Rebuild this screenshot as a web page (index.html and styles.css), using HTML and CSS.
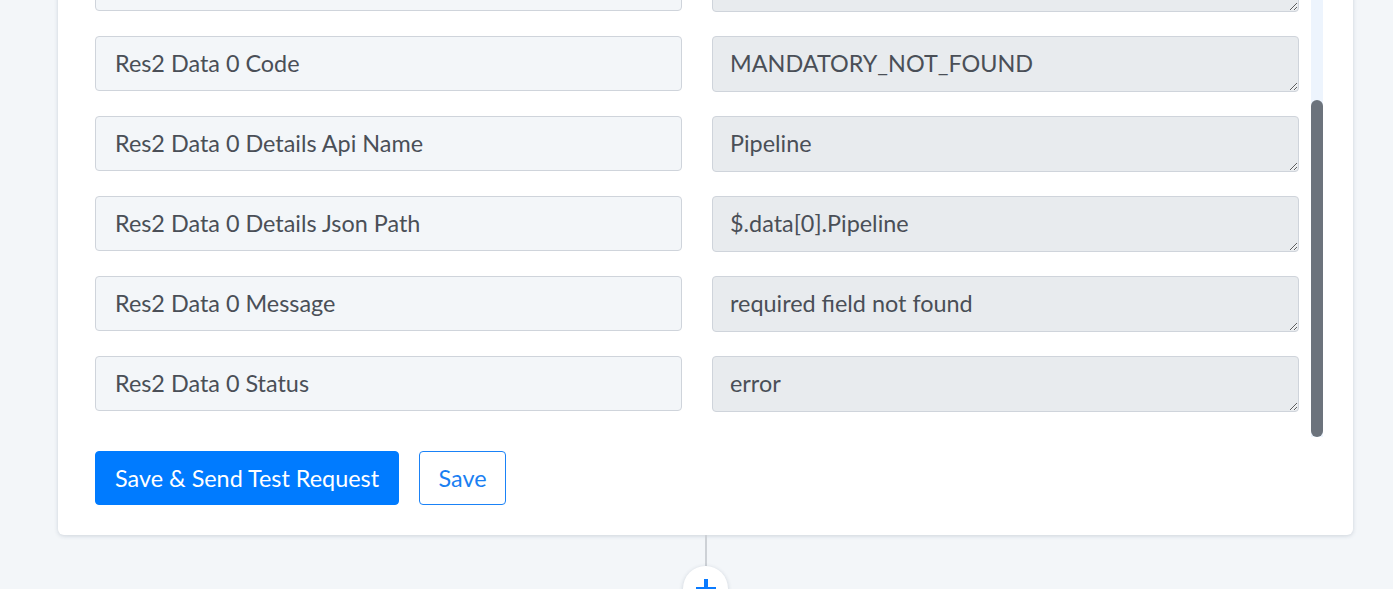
FILE: index.html
```html
<!DOCTYPE html>
<html lang="en">
<head>
<meta charset="utf-8">
<title>Response fields</title>
<link rel="stylesheet" href="styles.css">
</head>
<body>
<div class="card">
  <div class="scroll-area">
    <div class="fields">
      <input class="key" value="Res2 Data 0 Details" readonly>
      <textarea class="val" readonly>details</textarea>
      <input class="key" value="Res2 Data 0 Code" readonly>
      <textarea class="val" readonly>MANDATORY_NOT_FOUND</textarea>
      <input class="key" value="Res2 Data 0 Details Api Name" readonly>
      <textarea class="val" readonly>Pipeline</textarea>
      <input class="key" value="Res2 Data 0 Details Json Path" readonly>
      <textarea class="val" readonly>$.data[0].Pipeline</textarea>
      <input class="key" value="Res2 Data 0 Message" readonly>
      <textarea class="val" readonly>required field not found</textarea>
      <input class="key" value="Res2 Data 0 Status" readonly>
      <textarea class="val" readonly>error</textarea>
    </div>
    <div class="track"><div class="thumb"></div></div>
  </div>
  <div class="actions">
    <button class="btn btn-primary">Save &amp; Send Test Request</button>
    <button class="btn btn-outline">Save</button>
  </div>
</div>
<div class="connector">
  <div class="line"></div>
  <div class="add">
    <svg width="20" height="20" viewBox="0 0 20 20"><path d="M10 0v20M0 10h20" stroke="#0a7bff" stroke-width="4"/></svg>
  </div>
</div>
</body>
</html>
```
FILE: styles.css
```css
html, body {
  margin: 0;
  padding: 0;
  background: #f3f6f9;
  font-family: Lato, "Open Sans", sans-serif;
  overflow: hidden;
  height: 589px;
}
.card {
  box-sizing: border-box;
  width: 1295px;
  margin: -74px 0 0 58px;
  background: #fff;
  border-radius: 6px;
  box-shadow: 0 1px 4px rgba(40, 60, 90, 0.18);
  padding: 30px 30px 30px 37px;
}
.scroll-area {
  display: flex;
  gap: 12px;
}
.fields {
  display: grid;
  grid-template-columns: 587px 587px;
  column-gap: 30px;
  row-gap: 24px;
  align-items: start;
  padding-bottom: 25px;
}
.key, .val {
  box-sizing: border-box;
  width: 587px;
  border: 1px solid #cfd4db;
  border-radius: 4px;
  font-family: inherit;
  font-size: 23.4px;
  color: #4a4f57;
  padding: 0 19px;
  margin: 0;
  outline: none;
}
.key {
  height: 55px;
  background: #f3f6f9;
  padding-bottom: 2px;
}
.val {
  height: 56px;
  background: #e8ebee;
  padding: 10px 17px 0;
  line-height: 32px;
  resize: vertical;
  overflow: hidden;
  display: block;
}
.track {
  width: 12px;
  background: #edf4fd;
  display: flex;
  flex-direction: column;
  justify-content: flex-end;
}
.thumb {
  height: 337px;
  background: #6c737c;
  border-radius: 6px;
}
.actions {
  display: flex;
  gap: 20px;
  margin-top: 14px;
}
.btn {
  height: 54px;
  border-radius: 4px;
  font-family: inherit;
  font-size: 23.4px;
  padding: 0 19px 1px;
  cursor: pointer;
}
.btn-primary {
  background: #007bff;
  border: 1px solid #007bff;
  color: #fff;
}
.btn-outline {
  background: #fff;
  border: 1px solid #1a82f7;
  color: #1a7ff2;
  padding: 0 18.5px 1px;
}
.connector {
  display: flex;
  flex-direction: column;
  align-items: center;
  width: 1295px;
  margin-left: 58px;
}
.line {
  width: 2px;
  height: 31px;
  background: #cdd1d6;
}
.add {
  width: 45px;
  height: 45px;
  border-radius: 50%;
  background: #fff;
  box-shadow: 0 1px 4px rgba(40, 60, 90, 0.2);
  display: flex;
  align-items: center;
  justify-content: center;
}
```
